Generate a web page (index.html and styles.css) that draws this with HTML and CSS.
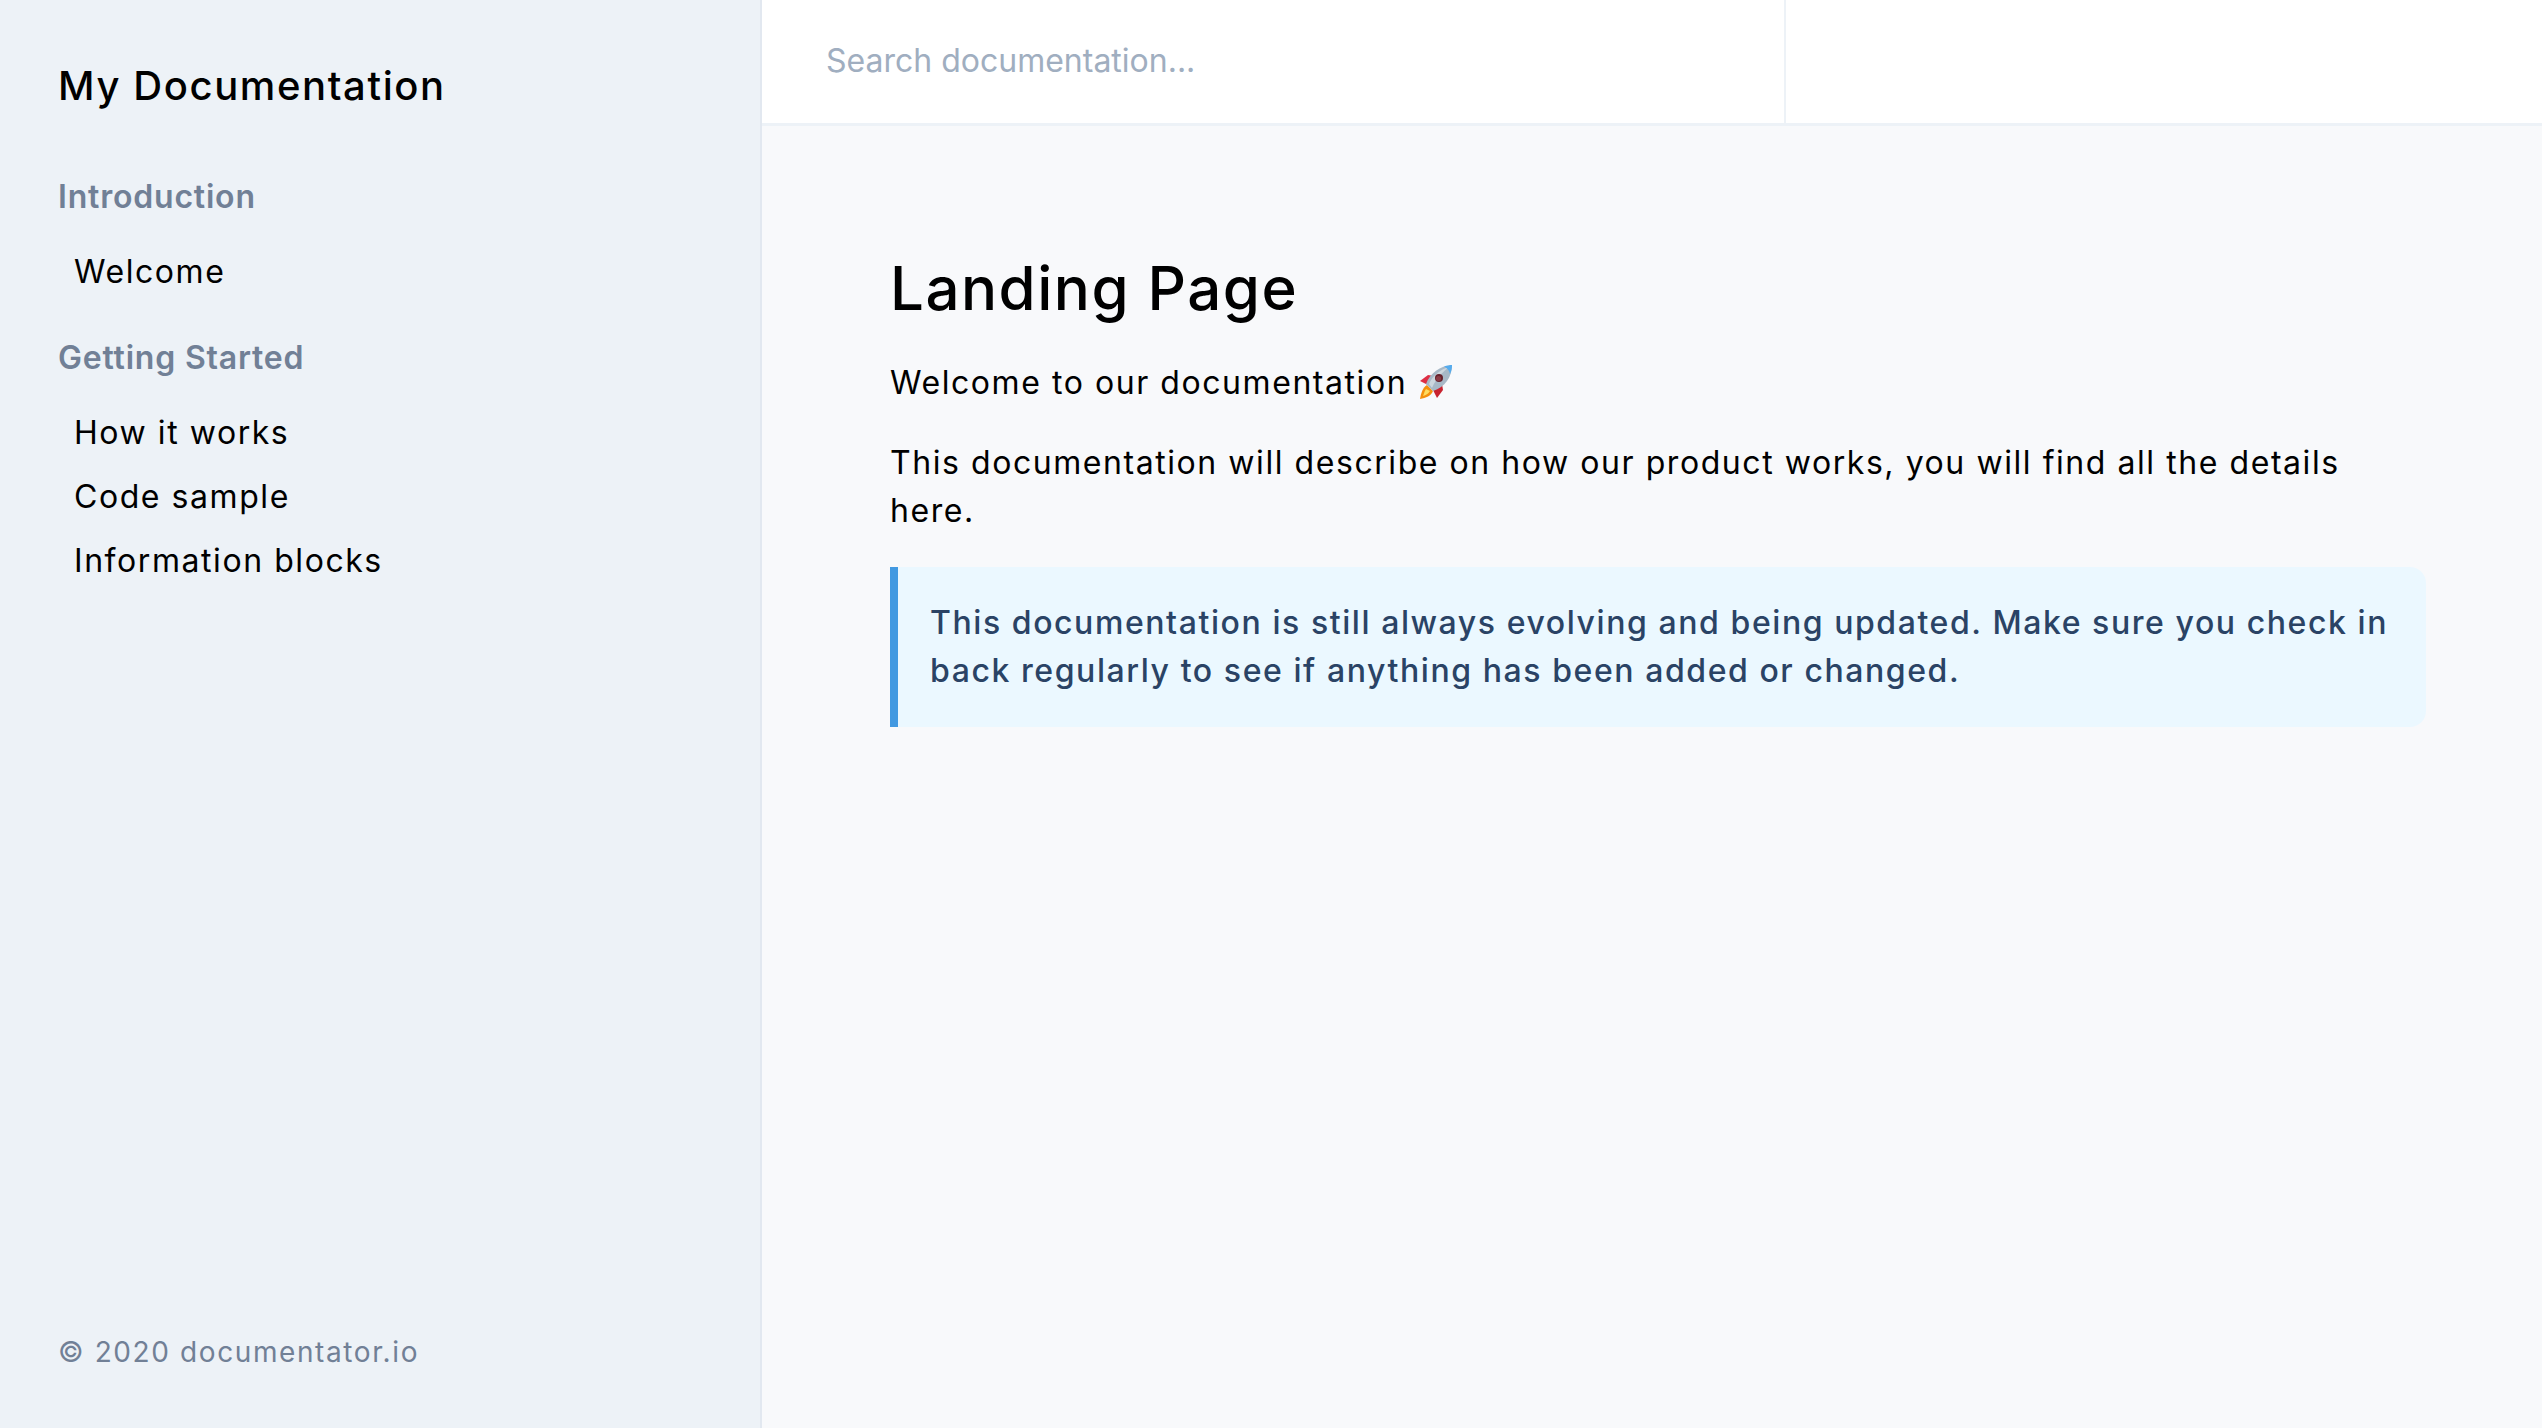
FILE: index.html
```html
<!DOCTYPE html>
<html lang="en">
<head>
<meta charset="utf-8">
<title>My Documentation</title>
<link rel="stylesheet" href="styles.css">
</head>
<body>
<div class="app">
  <aside class="sidebar">
    <h2 class="brand">My Documentation</h2>
    <nav class="nav">
      <h3 class="nav-group">Introduction</h3>
      <a class="nav-link">Welcome</a>
      <h3 class="nav-group">Getting Started</h3>
      <a class="nav-link">How it works</a>
      <a class="nav-link">Code sample</a>
      <a class="nav-link">Information blocks</a>
    </nav>
    <p class="copyright">© 2020 documentator.io</p>
  </aside>
  <div class="main">
    <header class="topbar">
      <div class="search">Search documentation...</div>
    </header>
    <article class="content">
      <h1 class="title">Landing Page</h1>
      <p class="para">Welcome to our documentation <svg class="rocket" viewBox="0 0 36 36" aria-label="rocket"><path d="M2 17 L10 11 L16 12 L10 21 Z" fill="#dd2e44"/><path d="M19 34 L25 26 L24 20 L15 26 Z" fill="#c8232f"/><path d="M9 21 C5 23 3 29 2 35 C8 34 13 32 15 27 Z" fill="#f4900c"/><path d="M8 25 C6 28 6 30 5 32 C8 31 10 30 12 27 Z" fill="#ffdc5d"/><path d="M8 20 C12 9 22 2 34 1 C34 13 27 23 15 27 Z" fill="#a7b8c6"/><path d="M11 20 C15 11 23 5 31 3 C25 8 18 14 14 24 Z" fill="#ccd6dd"/><path d="M26 2.500 C29 1.500 32 1 34 1 C34 4 33.500 7 32 10 C31 6 29 4 26 2.500 Z" fill="#55acee"/><circle cx="21" cy="14" r="4" fill="#66212b"/><circle cx="20.500" cy="14.500" r="2.500" fill="#8c3b45"/></svg></p>
      <p class="para">This documentation will describe on how our product works, you will find all the details here.</p>
      <div class="info">This documentation is still always evolving and being updated. Make sure you check in back regularly to see if anything has been added or changed.</div>
    </article>
  </div>
</div>
</body>
</html>
```
FILE: styles.css
```css
* { box-sizing: border-box; }
html, body { margin: 0; height: 100%; }
body {
  font-family: Inter, "Liberation Sans", sans-serif;
  color: #000;
  background: #f8f9fb;
}
.app { display: flex; height: 1428px; overflow: hidden; }
.sidebar {
  width: 762px;
  flex: none;
  display: flex;
  flex-direction: column;
  padding: 58px 58px 0;
  background: #edf2f7;
  border-right: 2px solid #e2e8f0;
}
.brand {
  margin: 0 0 59px;
  font-size: 40px;
  line-height: 56px;
  font-weight: 500;
  letter-spacing: 1.6px;
}
.nav { flex: 1; display: flex; flex-direction: column; }
.nav-group {
  margin: 0 0 19px;
  font-size: 32px;
  line-height: 48px;
  font-weight: 600;
  letter-spacing: 0.8px;
  color: #718096;
}
.nav-link {
  padding: 8px 16px;
  font-size: 32px;
  line-height: 48px;
  letter-spacing: 1.56px;
}
.nav-link + .nav-group { margin-top: 30px; }
.copyright {
  margin: 0 0 55px;
  font-size: 28px;
  line-height: 42px;
  letter-spacing: 1.6px;
  color: #718096;
}
.main { flex: 1; min-width: 0; }
.topbar {
  height: 126px;
  background: #fff;
  border-bottom: 3px solid #edf2f7;
}
.search {
  width: 1024px;
  height: 123px;
  padding: 37px 64px;
  font-size: 32px;
  line-height: 48px;
  color: #a0aec0;
  border-right: 2px solid #edf2f7;
}
.content { padding: 117px 116px 0 128px; }
.title {
  margin: 0 0 26px;
  font-size: 60px;
  line-height: 90px;
  font-weight: 500;
  letter-spacing: 1.5px;
}
.para {
  margin: 0 0 32px;
  font-size: 32px;
  line-height: 48px;
  letter-spacing: 1.56px;
}
.rocket { width: 36px; height: 36px; vertical-align: -6px; }
.info {
  padding: 32px;
  font-size: 32px;
  line-height: 48px;
  font-weight: 500;
  letter-spacing: 1.57px;
  color: #2a4365;
  background: #ebf8ff;
  border-left: 8px solid #4299e1;
  border-radius: 0 16px 16px 0;
}
```
